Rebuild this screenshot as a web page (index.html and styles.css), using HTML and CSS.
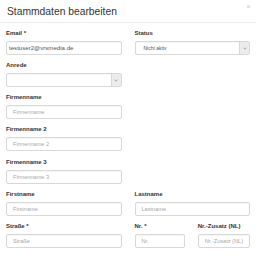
FILE: index.html
```html
<!DOCTYPE html>
<html lang="de">
<head>
<meta charset="utf-8">
<link rel="stylesheet" href="styles.css">
</head>
<body>
<div class="modal">
  <div class="modal-header">
    <h4 class="modal-title">Stammdaten bearbeiten</h4>
    <span class="close">×</span>
  </div>
  <div class="modal-body">
    <div class="row">
      <div class="field">
        <label class="lbl">Email *</label>
        <div class="input input-filled input-tight">testuser2@vrsmedia.de</div>
      </div>
      <div class="field">
        <label class="lbl">Status</label>
        <div class="input select"><span class="select-text">Nicht aktiv</span><span class="caret"><svg width="4" height="3" viewBox="0 0 4 3"><polyline points="0.5,0.8 2,2.2 3.5,0.8" fill="none" stroke="#888" stroke-width="0.7"/></svg></span></div>
      </div>
    </div>
    <div class="row">
      <div class="field">
        <label class="lbl">Anrede</label>
        <div class="input select"><span class="select-text"></span><span class="caret"><svg width="4" height="3" viewBox="0 0 4 3"><polyline points="0.5,0.8 2,2.2 3.5,0.8" fill="none" stroke="#888" stroke-width="0.7"/></svg></span></div>
      </div>
    </div>
    <div class="row">
      <div class="field">
        <label class="lbl">Firmenname</label>
        <div class="input placeholder">Firmenname</div>
      </div>
    </div>
    <div class="row">
      <div class="field">
        <label class="lbl">Firmenname 2</label>
        <div class="input placeholder">Firmenname 2</div>
      </div>
    </div>
    <div class="row">
      <div class="field">
        <label class="lbl">Firmenname 3</label>
        <div class="input placeholder">Firmenname 3</div>
      </div>
    </div>
    <div class="row">
      <div class="field">
        <label class="lbl">Firstname</label>
        <div class="input placeholder">Firstname</div>
      </div>
      <div class="field">
        <label class="lbl">Lastname</label>
        <div class="input placeholder">Lastname</div>
      </div>
    </div>
    <div class="row">
      <div class="field">
        <label class="lbl">Straße *</label>
        <div class="input placeholder">Straße</div>
      </div>
      <div class="row row-inner">
        <div class="field">
          <label class="lbl">Nr. *</label>
          <div class="input placeholder">Nr.</div>
        </div>
        <div class="field">
          <label class="lbl">Nr.-Zusatz (NL)</label>
          <div class="input placeholder">Nr.-Zusatz (NL)</div>
        </div>
      </div>
    </div>
  </div>
</div>
</body>
</html>
```
FILE: styles.css
```css
html, body {
  margin: 0;
  padding: 0;
  background: #fff;
}
body {
  font-family: "Liberation Sans", Arial, sans-serif;
  color: #333;
  width: 256px;
  overflow: hidden;
}
.modal {
  width: 256px;
}
.modal-header {
  height: 22px;
  border-bottom: 1px solid #ececec;
  display: flex;
  align-items: center;
  justify-content: space-between;
  padding: 0 5px 0 7px;
  box-sizing: content-box;
}
.modal-title {
  margin: 2px 0 0 0;
  font-size: 10.3px;
  font-weight: normal;
  color: #333;
  line-height: 12px;
}
.close {
  font-size: 8px;
  color: #c8c8c8;
  line-height: 8px;
  align-self: flex-start;
  margin-top: 3px;
}
.modal-body {
  padding: 6px 6px 0 6px;
}
.row {
  display: grid;
  grid-template-columns: 1fr 1fr;
  column-gap: 13px;
}
.row-inner {
  column-gap: 13px;
}
.field {
  display: flex;
  flex-direction: column;
  margin-bottom: 6.17px;
}
.row-inner .field {
  margin-bottom: 0;
}
.lbl {
  font-size: 6px;
  font-weight: bold;
  line-height: 8px;
  height: 8px;
  margin-bottom: 4px;
  color: #333;
  white-space: nowrap;
}
.input {
  height: 14px;
  box-sizing: border-box;
  border: 1px solid #d8d8d8;
  border-radius: 2px;
  font-size: 5.6px;
  line-height: 12px;
  padding: 0 6px;
  color: #555;
  white-space: nowrap;
  overflow: hidden;
  box-shadow: inset 0 1px 1px rgba(0,0,0,0.04);
}
.input-tight {
  padding-left: 2px;
  font-size: 6.1px;
}
.placeholder {
  color: #a8a8a8;
}
.select {
  display: flex;
  padding: 0 0 0 8px;
}
.select-text {
  flex: 1;
  font-size: 5px;
  color: #555;
}
.caret {
  width: 9px;
  background: #ececec;
  border-left: 1px solid #d8d8d8;
  display: flex;
  align-items: center;
  justify-content: center;
}
.caret svg {
  display: block;
}
```
